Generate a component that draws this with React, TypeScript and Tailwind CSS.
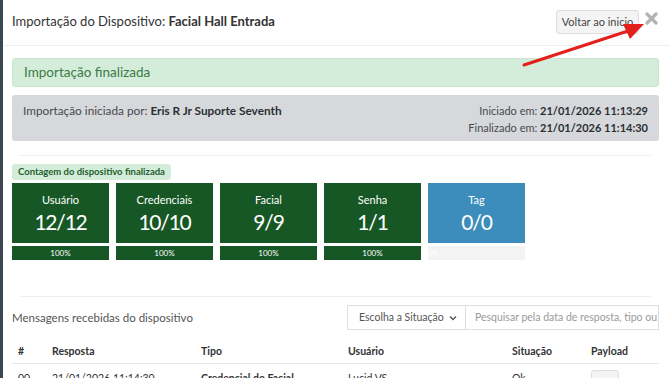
import React from 'react';

const cards = [
  { label: 'Usuário', value: '12/12', pct: '100%', done: true },
  { label: 'Credenciais', value: '10/10', pct: '100%', done: true },
  { label: 'Facial', value: '9/9', pct: '100%', done: true },
  { label: 'Senha', value: '1/1', pct: '100%', done: true },
  { label: 'Tag', value: '0/0', pct: '0%', done: false },
];

export default function App() {
  return (
    <div
      className="w-[670px] h-[378px] overflow-hidden relative flex flex-col bg-white text-[#333]"
      style={{ fontFamily: 'Lato, "Noto Sans", sans-serif' }}
    >
      <div className="h-[2px] bg-[#22313b]" />
      <div className="flex flex-1">
        <div className="w-[3px] bg-[#3a4650]" />
        <div className="flex-1 flex flex-col">
          {/* cabeçalho */}
          <div className="h-[46px] flex items-start justify-between pl-[9px] pr-[12px] border-b border-[#eeeeee]">
            <div className="mt-[12px] text-[13px] text-[#333]">
              Importação do Dispositivo: <span className="font-bold">Facial Hall Entrada</span>
            </div>
            <div className="flex items-start mt-[10px]">
              <button className="h-[24px] w-[83px] text-[11px] text-[#444] bg-[#f4f4f4] border border-[#dddddd] rounded-[3px] whitespace-nowrap">
                Voltar ao inicio
              </button>
              <svg className="ml-[6px] mt-[2px]" width="13" height="13" viewBox="0 0 13 13">
                <path d="M2 2 L11 11 M11 2 L2 11" stroke="#b3b3b3" strokeWidth="3.2" strokeLinecap="round" />
              </svg>
            </div>
          </div>

          <div className="pl-[9px] pr-[11px] flex flex-col">
            {/* alerta */}
            <div className="mt-[12px] h-[29px] flex items-center px-[11px] bg-[#d4edda] border border-[#c9e6cf] rounded-[3px] text-[13.5px] text-[#3d7a47]">
              Importação finalizada
            </div>

            {/* info */}
            <div className="mt-[8px] h-[46px] flex justify-between px-[11px] pt-[7px] bg-[#d6d8db] rounded-[3px] text-[11.8px] text-[#464a4e]">
              <div>
                Importação iniciada por: <span className="font-bold text-[#2b2f33]">Eris R Jr Suporte Seventh</span>
              </div>
              <div className="text-right text-[11px] leading-[17px]">
                <div>
                  Iniciado em: <span className="font-bold text-[#2b2f33]">21/01/2026 11:13:29</span>
                </div>
                <div>
                  Finalizado em: <span className="font-bold text-[#2b2f33]">21/01/2026 11:14:30</span>
                </div>
              </div>
            </div>

            <div className="mt-[14px] mx-[8px] border-t border-[#eeeeee]" />

            {/* contagem */}
            <div className="mt-[8px] self-start h-[16px] flex items-center px-[6px] bg-[#d4edda] rounded-[3px] text-[9.5px] font-bold text-[#1e5e2c]">
              Contagem do dispositivo finalizada
            </div>
            <div className="mt-[3px] flex gap-[7px]">
              {cards.map((c) => (
                <div key={c.label} className="w-[97px] flex flex-col gap-[3px]">
                  <div
                    className={
                      'h-[60px] flex flex-col items-center pt-[10px] text-white ' +
                      (c.done ? 'bg-[#175725]' : 'bg-[#3c8dbc]')
                    }
                  >
                    <div className="text-[11px] leading-[14px]">{c.label}</div>
                    <div className="text-[21px] leading-[26px] mt-[2px] tracking-[-1.2px]">{c.value}</div>
                  </div>
                  <div
                    className={
                      'h-[14px] flex items-center text-[8px] text-white ' +
                      (c.done ? 'bg-[#175725] justify-center' : 'bg-[#f3f3f3] justify-start')
                    }
                  >
                    {c.pct}
                  </div>
                </div>
              ))}
            </div>

            <div className="mt-[36px] mx-[8px] border-t border-[#eeeeee]" />

            {/* mensagens */}
            <div className="mt-[8px] flex items-center justify-between">
              <div className="text-[11.5px] text-[#555]">Mensagens recebidas do dispositivo</div>
              <div className="flex">
                <div className="w-[119px] h-[25px] flex items-center justify-between pl-[11px] pr-[8px] border border-[#dedede] text-[10.5px] text-[#555] whitespace-nowrap">
                  <span>Escolha a Situação</span>
                  <svg width="8" height="6" viewBox="0 0 8 6">
                    <path d="M1 1.5 L4 4.5 L7 1.5" stroke="#555" strokeWidth="1.4" fill="none" />
                  </svg>
                </div>
                <div className="w-[193px] h-[25px] flex items-center pl-[9px] border border-l-0 border-[#dedede] text-[10.5px] text-[#9a9a9a] whitespace-nowrap overflow-hidden">
                  Pesquisar pela data de resposta, tipo ou
                </div>
              </div>
            </div>

            {/* tabela */}
            <div className="mt-[10px] h-[24px] flex items-center border-b border-[#e6e6e6] text-[10.5px] font-bold text-[#333]">
              <div className="w-[40px] pl-[6px]">#</div>
              <div className="w-[149px]">Resposta</div>
              <div className="w-[147px]">Tipo</div>
              <div className="w-[164px]">Usuário</div>
              <div className="w-[79px]">Situação</div>
              <div>Payload</div>
            </div>
            <div className="h-[30px] flex items-start pt-[7px] text-[10.5px] text-[#333]">
              <div className="w-[40px] pl-[6px]">00</div>
              <div className="w-[149px]">21/01/2026 11:14:30</div>
              <div className="w-[147px] font-bold">Credencial do Facial</div>
              <div className="w-[164px]">Lucid VS</div>
              <div className="w-[79px]">Ok</div>
              <div className="w-[28px] h-[18px] mt-[-1px] bg-[#f4f4f4] border border-[#dddddd] rounded-[3px]" />
            </div>
          </div>
        </div>
      </div>

      {/* seta vermelha */}
      <svg className="absolute left-0 top-0 pointer-events-none" width="670" height="378">
        <line x1="524" y1="65" x2="628" y2="31" stroke="#e3201b" strokeWidth="3" strokeLinecap="round" />
        <polygon points="644,24 623,24 630,39" fill="#e3201b" />
      </svg>
    </div>
  );
}
